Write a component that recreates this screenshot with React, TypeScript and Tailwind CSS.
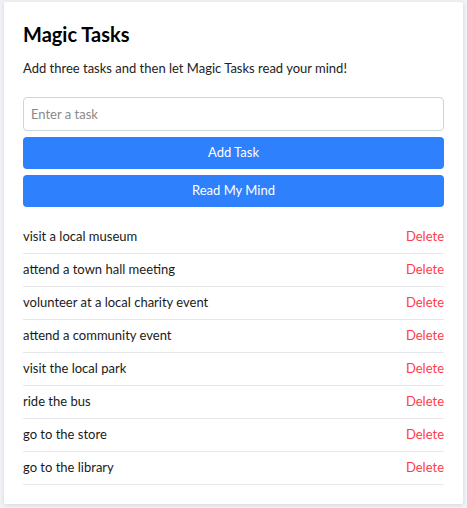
const tasks = [
  "visit a local museum",
  "attend a town hall meeting",
  "volunteer at a local charity event",
  "attend a community event",
  "visit the local park",
  "ride the bus",
  "go to the store",
  "go to the library",
];

export default function App() {
  return (
    <div
      className="min-h-[508px] bg-[#f0f2f5] px-1 pt-[2px] pb-[5px]"
      style={{ fontFamily: '"Segoe UI", Lato, "Noto Sans", sans-serif' }}
    >
      <div className="rounded-[2px] bg-white px-[19px] pt-[18px] pb-[19px] shadow-[0_1px_4px_rgba(0,0,0,0.12)]">
        <h1 className="text-[20px] font-bold leading-[28px] text-black">Magic Tasks</h1>
        <p className="mt-[10px] text-[13px] leading-[20px] text-[#222]">
          Add three tasks and then let Magic Tasks read your mind!
        </p>
        <input
          className="mt-[19px] block h-[34px] w-full rounded-[4px] border border-[#cfd4da] px-[7px] text-[13px] text-[#333] placeholder:text-[#8a8a8a] outline-none"
          placeholder="Enter a task"
        />
        <button className="mt-[6px] block h-[32px] w-full rounded-[4px] bg-[#2f80fd] text-[13px] text-white">
          Add Task
        </button>
        <button className="mt-[6px] block h-[32px] w-full rounded-[4px] bg-[#2f80fd] text-[13px] text-white">
          Read My Mind
        </button>
        <ul className="mt-[14px]">
          {tasks.map((t) => (
            <li
              key={t}
              className="flex h-[33px] items-center justify-between border-b border-[#e5e7eb] text-[13px]"
            >
              <span className="text-[#1a1a1a]">{t}</span>
              <button className="text-[#ff3b4a]">Delete</button>
            </li>
          ))}
        </ul>
      </div>
    </div>
  );
}
